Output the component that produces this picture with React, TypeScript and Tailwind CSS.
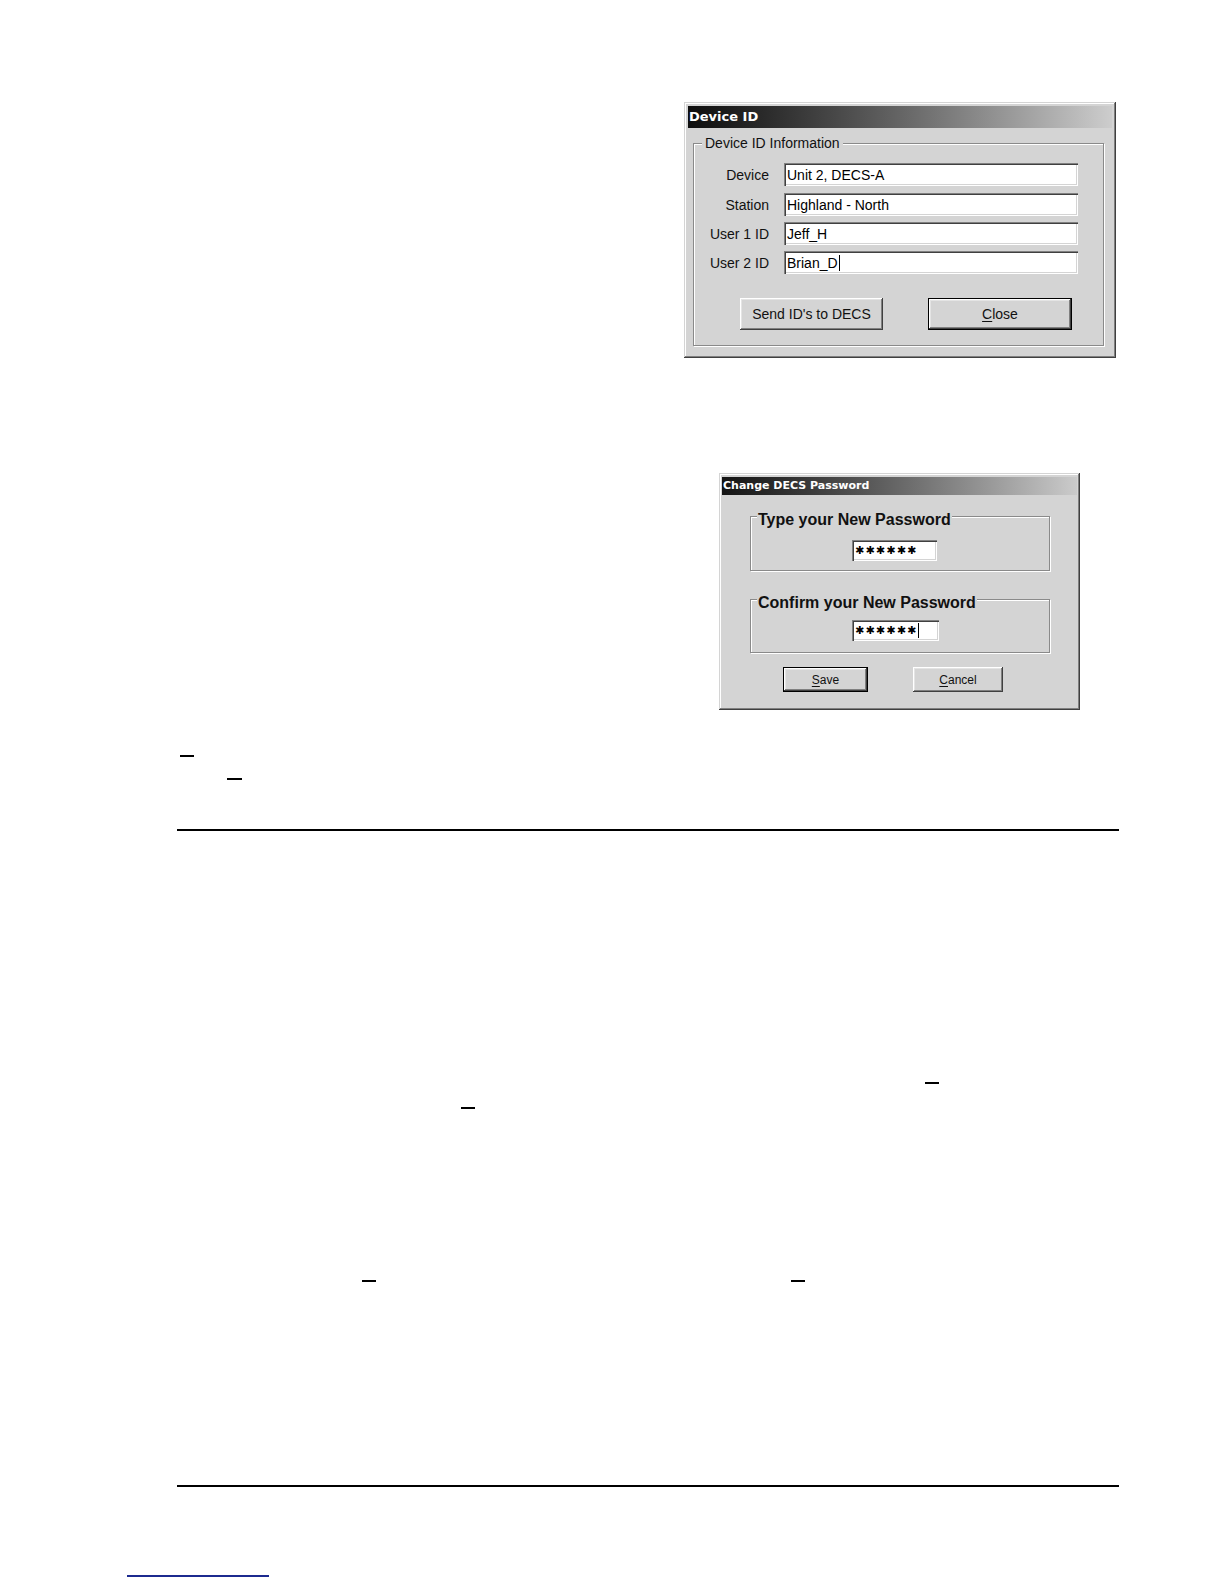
import React from "react";

const frame =
  "shadow-[inset_-1px_-1px_0_#404040,inset_1px_1px_0_#d4d4d4,inset_-2px_-2px_0_#808080,inset_2px_2px_0_#ffffff]";
const raised =
  "shadow-[inset_-1px_-1px_0_#404040,inset_1px_1px_0_#ffffff,inset_-2px_-2px_0_#808080,inset_2px_2px_0_#e4e4e4]";
const sunken =
  "shadow-[inset_1px_1px_0_#808080,inset_2px_2px_0_#404040,inset_-1px_-1px_0_#ffffff,inset_-2px_-2px_0_#d4d4d4]";
const etched =
  "border border-[#8a8a8a] shadow-[inset_1px_1px_0_#ffffff,1px_1px_0_#ffffff]";

function Field({ value, cursor }: { value: string; cursor?: boolean }) {
  return (
    <div
      className={`ml-[15px] w-[294px] h-[23px] bg-white flex items-center pl-[3px] text-[14px] leading-[16px] ${sunken}`}
    >
      <span>{value}</span>
      {cursor && <span className="inline-block w-[1px] h-[16px] bg-black ml-[1px]" />}
    </div>
  );
}

function DeviceIdDialog() {
  const rows: [string, string, string][] = [
    ["Device", "Unit 2, DECS-A", "mt-[12px]"],
    ["Station", "Highland - North", "mt-[7px]"],
    ["User 1 ID", "Jeff_H", "mt-[6px]"],
    ["User 2 ID", "Brian_D", "mt-[6px]"],
  ];
  return (
    <div
      className={`ml-[684px] mt-[102px] w-[432px] h-[256px] bg-[#d4d4d4] p-[4px] flex flex-col ${frame}`}
    >
      <div className="h-[22px] shrink-0 flex items-center pl-[1px] bg-linear-to-r from-[#0e0e0e] to-[#cdcdcd] text-white font-bold text-[13px] font-['DejaVu_Sans',Verdana,sans-serif]">
        Device ID
      </div>
      <fieldset className={`mt-[7px] ml-[5px] w-[411px] pb-[15px] ${etched}`}>
        <legend className="ml-[8px] px-[3px] text-[14px] leading-[16px] bg-[#d4d4d4] text-[#111]">
          Device ID Information
        </legend>
        {rows.map(([label, value, mt], i) => (
          <div key={label} className={`flex items-center ${mt}`}>
            <div className="w-[75px] text-right text-[14px] leading-[16px] text-[#111]">{label}</div>
            <Field value={value} cursor={i === 3} />
          </div>
        ))}
        <div className="flex ml-[46px] mt-[24px] gap-[45px]">
          <button
            className={`w-[143px] h-[32px] bg-[#d4d4d4] text-[14px] text-[#111] flex items-center justify-center ${raised}`}
          >
            Send ID's to DECS
          </button>
          <button
            className={`w-[144px] h-[32px] bg-[#d4d4d4] border border-black text-[14px] text-[#111] flex items-center justify-center ${raised}`}
          >
            <span>
              <span className="underline underline-offset-2">C</span>lose
            </span>
          </button>
        </div>
      </fieldset>
    </div>
  );
}

function PwField({ width, cursor }: { width: string; cursor?: boolean }) {
  return (
    <div
      className={`ml-[101px] ${width} h-[21px] bg-white flex items-center pl-[3px] ${sunken}`}
    >
      <span className="text-[11px] leading-[12px] tracking-[1.2px] font-['DejaVu_Sans',sans-serif] font-bold">
        ✱✱✱✱✱✱
      </span>
      {cursor && <span className="inline-block w-[1px] h-[15px] bg-black" />}
    </div>
  );
}

function PasswordDialog() {
  return (
    <div
      className={`ml-[719px] mt-[115px] w-[361px] h-[237px] bg-[#d4d4d4] pt-[4px] px-[3px] flex flex-col ${frame}`}
    >
      <div className="h-[18px] shrink-0 flex items-center pl-[1px] bg-linear-to-r from-[#141414] to-[#cbcbcb] text-white font-bold text-[11px] font-['DejaVu_Sans',Verdana,sans-serif]">
        Change DECS Password
      </div>
      <fieldset className={`mt-[8px] ml-[28px] w-[300px] pb-[9px] ${etched}`}>
        <legend className="ml-[6px] pt-[8px] px-[1px] text-[16px] leading-[18px] font-bold bg-[#d4d4d4] text-[#111]">
          Type your New Password
        </legend>
        <div className="mt-[11px]">
          <PwField width="w-[85px]" />
        </div>
      </fieldset>
      <fieldset className={`mt-[15px] ml-[28px] w-[300px] pb-[11px] ${etched}`}>
        <legend className="ml-[6px] pt-[8px] px-[1px] text-[16px] leading-[18px] font-bold bg-[#d4d4d4] text-[#111]">
          Confirm your New Password
        </legend>
        <div className="mt-[8px]">
          <PwField width="w-[87px]" cursor />
        </div>
      </fieldset>
      <div className="flex ml-[61px] mt-[14px] gap-[45px]">
        <button
          className={`w-[85px] h-[25px] bg-[#d4d4d4] border border-black text-[12px] text-[#111] flex items-center justify-center ${raised}`}
        >
          <span>
            <span className="underline underline-offset-2">S</span>ave
          </span>
        </button>
        <button
          className={`w-[90px] h-[25px] bg-[#d4d4d4] text-[12px] text-[#111] flex items-center justify-center ${raised}`}
        >
          <span>
            <span className="underline underline-offset-2">C</span>ancel
          </span>
        </button>
      </div>
    </div>
  );
}

export default function App() {
  return (
    <div className="w-[1224px] h-[1584px] bg-white flex flex-col items-start overflow-hidden font-['Liberation_Sans',Arial,sans-serif] text-black">
      <DeviceIdDialog />
      <PasswordDialog />
      <div className="ml-[180px] mt-[45px] w-[14px] h-[2px] bg-black" />
      <div className="ml-[227px] mt-[21px] w-[15px] h-[2px] bg-black" />
      <div className="ml-[177px] mt-[49px] w-[942px] h-[2px] bg-black" />
      <div className="ml-[925px] mt-[251px] w-[14px] h-[2px] bg-black" />
      <div className="ml-[461px] mt-[23px] w-[14px] h-[2px] bg-black" />
      <div className="flex mt-[171px]">
        <div className="ml-[362px] w-[14px] h-[2px] bg-black" />
        <div className="ml-[415px] w-[14px] h-[2px] bg-black" />
      </div>
      <div className="ml-[177px] mt-[203px] w-[942px] h-[2px] bg-black" />
      <div className="ml-[127px] mt-[88px] w-[142px] h-[2px] bg-[#1c2a8f]" />
    </div>
  );
}
